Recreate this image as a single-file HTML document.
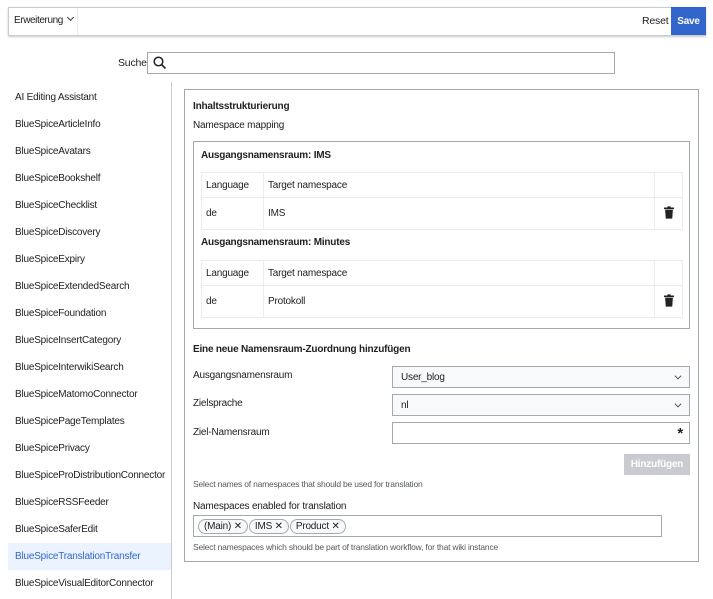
<!DOCTYPE html>
<html><head><meta charset="utf-8"><style>
*{box-sizing:border-box;margin:0;padding:0}
body{width:713px;height:599px;background:#fff;font-family:"Liberation Sans",sans-serif;font-size:10px;color:#202122;position:relative;overflow:hidden;letter-spacing:-0.2px}
.a{position:absolute;white-space:nowrap}
.b{font-weight:bold}
.box{position:absolute;border:1px solid #c8ccd1}
.nav{position:absolute;left:15px}
.sel{position:absolute;left:392px;width:298px;height:22px;border:1px solid #a2a9b1;background:#f8f9fa;padding:5px 8px}
.chev{position:absolute;right:8px;top:6px;width:6px;height:6px;border-right:1.5px solid #333;border-bottom:1.5px solid #333;transform:rotate(45deg) scale(.8)}
table{position:absolute;left:201px;width:482px;border-collapse:collapse}
td{border:1px solid #eaecf0;padding:0 4px}
.tag{display:inline-block;border:1px solid #a2a9b1;border-radius:9px;padding:1px 5px;margin-right:1px;background:#f8f9fa}
</style></head><body>
<div class="box" style="left:8px;top:7px;width:698px;height:29px;box-shadow:0 1px 2px #ccc"></div>
<div class="a" style="left:77px;top:8px;width:1px;height:27px;background:#eaecf0"></div>
<div class="a" style="left:14px;top:15px;font-size:10px;letter-spacing:-0.4px">Erweiterung</div>
<div class="a" style="left:68px;top:15px;width:5px;height:5px;border-right:1.3px solid #333;border-bottom:1.3px solid #333;transform:rotate(45deg)"></div>
<div class="a" style="left:642px;top:15px;font-size:10.5px">Reset</div>
<div class="a b" style="left:671px;top:7px;width:35px;height:28px;background:#3366cc;color:#fff;text-align:center;padding-top:9px">Save</div>
<div class="a" style="left:118px;top:57px;font-size:10.5px">Suche</div>
<div class="box" style="left:147px;top:52px;width:468px;height:22px;border-color:#a2a9b1"></div>
<svg class="a" style="left:153px;top:56px" width="14" height="14" viewBox="0 0 14 14"><circle cx="5.5" cy="5.5" r="4.3" fill="none" stroke="#202122" stroke-width="1.5"/><path d="M8.7 8.7L12.5 12.5" stroke="#202122" stroke-width="1.6"/></svg>
<div class="a" style="left:171px;top:82px;width:1px;height:517px;background:#c8ccd1"></div>
<div class="a" style="left:8px;top:543px;width:163px;height:27px;background:#eaf3ff"></div>
<div class="nav a" style="top:92px">AI Editing Assistant</div>
<div class="nav a" style="top:119px">BlueSpiceArticleInfo</div>
<div class="nav a" style="top:146px">BlueSpiceAvatars</div>
<div class="nav a" style="top:173px">BlueSpiceBookshelf</div>
<div class="nav a" style="top:200px">BlueSpiceChecklist</div>
<div class="nav a" style="top:227px">BlueSpiceDiscovery</div>
<div class="nav a" style="top:254px">BlueSpiceExpiry</div>
<div class="nav a" style="top:281px">BlueSpiceExtendedSearch</div>
<div class="nav a" style="top:308px">BlueSpiceFoundation</div>
<div class="nav a" style="top:335px">BlueSpiceInsertCategory</div>
<div class="nav a" style="top:362px">BlueSpiceInterwikiSearch</div>
<div class="nav a" style="top:389px">BlueSpiceMatomoConnector</div>
<div class="nav a" style="top:416px">BlueSpicePageTemplates</div>
<div class="nav a" style="top:443px">BlueSpicePrivacy</div>
<div class="nav a" style="top:470px">BlueSpiceProDistributionConnector</div>
<div class="nav a" style="top:497px">BlueSpiceRSSFeeder</div>
<div class="nav a" style="top:524px">BlueSpiceSaferEdit</div>
<div class="nav a" style="top:551px;color:#3366cc">BlueSpiceTranslationTransfer</div>
<div class="nav a" style="top:578px">BlueSpiceVisualEditorConnector</div>

<div class="box" style="left:184px;top:89px;width:515px;height:473px;border-color:#a2a9b1"></div>
<div class="a b" style="left:193px;top:101px">Inhaltsstrukturierung</div>
<div class="a" style="left:193px;top:120px">Namespace mapping</div>
<div class="box" style="left:193px;top:141px;width:497px;height:188px;border-color:#a2a9b1"></div>
<div class="a b" style="left:201px;top:150px">Ausgangsnamensraum: IMS</div>
<table style="top:172px"><tr style="height:25px"><td style="width:62px">Language</td><td>Target namespace</td><td style="width:28px"></td></tr>
<tr style="height:32px"><td>de</td><td>IMS</td><td style="text-align:center"><svg width="10" height="13" viewBox="0 0 9 11"><rect x="0" y="1" width="9" height="1.5" fill="#222"/><rect x="3" y="0" width="3" height="1.5" fill="#222"/><path d="M1 3h7l-.6 8H1.6z" fill="#222"/></svg></td></tr></table>
<div class="a b" style="left:201px;top:237px">Ausgangsnamensraum: Minutes</div>
<table style="top:260px"><tr style="height:25px"><td style="width:62px">Language</td><td>Target namespace</td><td style="width:28px"></td></tr>
<tr style="height:32px"><td>de</td><td>Protokoll</td><td style="text-align:center"><svg width="10" height="13" viewBox="0 0 9 11"><rect x="0" y="1" width="9" height="1.5" fill="#222"/><rect x="3" y="0" width="3" height="1.5" fill="#222"/><path d="M1 3h7l-.6 8H1.6z" fill="#222"/></svg></td></tr></table>

<div class="a b" style="left:193px;top:344px">Eine neue Namensraum-Zuordnung hinzufügen</div>
<div class="a" style="left:193px;top:370px">Ausgangsnamensraum</div>
<div class="a" style="left:193px;top:398px">Zielsprache</div>
<div class="a" style="left:193px;top:427px">Ziel-Namensraum</div>
<div class="sel" style="top:366px">User_blog<span class="chev"></span></div>
<div class="sel" style="top:394px">nl<span class="chev"></span></div>
<div class="sel" style="top:422px;background:#fff"><span class="a b" style="right:6px;top:2px;font-size:15px">*</span></div>
<div class="a b" style="left:624px;top:454px;width:66px;height:21px;background:#c8ccd1;color:#fff;text-align:center;line-height:21px">Hinzufügen</div>
<div class="a" style="left:193px;top:479px;font-size:8.5px;color:#54595d">Select names of namespaces that should be used for translation</div>
<div class="a" style="left:193px;top:501px">Namespaces enabled for translation</div>
<div class="box" style="left:193px;top:515px;width:469px;height:22px;border-color:#a2a9b1;padding:3px 4px"><span class="tag">(Main) ✕</span><span class="tag">IMS ✕</span><span class="tag">Product ✕</span></div>
<div class="a" style="left:193px;top:542px;font-size:8.5px;color:#54595d">Select namespaces which should be part of translation workflow, for that wiki instance</div>
</body></html>
